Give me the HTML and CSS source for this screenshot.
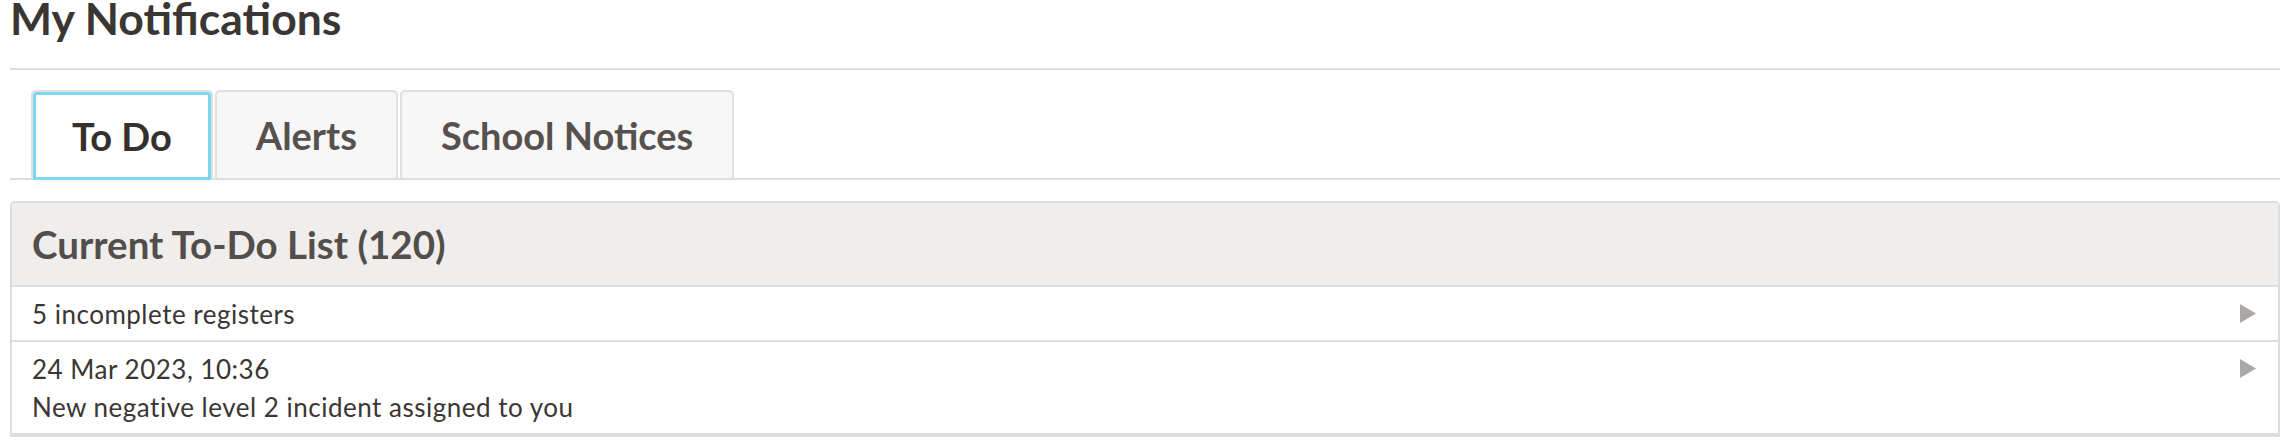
FILE: index.html
```html
<!DOCTYPE html>
<html lang="en">
<head>
<meta charset="utf-8">
<title>My Notifications</title>
<link rel="stylesheet" href="styles.css">
</head>
<body>
<div class="page">
  <h1 class="title">My Notifications</h1>
  <div class="tabs">
    <div class="tab active">To Do</div>
    <div class="tab">Alerts</div>
    <div class="tab">School Notices</div>
  </div>
  <div class="panel">
    <div class="panel-head">Current To-Do List (120)</div>
    <div class="row">
      <div class="row-text"><div>5 incomplete registers</div></div>
      <svg class="arrow" width="16" height="19" viewBox="0 0 16 19"><polygon points="0,0 16,9.5 0,19" fill="#aba7a4"/></svg>
    </div>
    <div class="row">
      <div class="row-text">
        <div>24 Mar 2023, 10:36</div>
        <div>New negative level 2 incident assigned to you</div>
      </div>
      <svg class="arrow" width="16" height="19" viewBox="0 0 16 19"><polygon points="0,0 16,9.5 0,19" fill="#aba7a4"/></svg>
    </div>
  </div>
</div>
</body>
</html>
```
FILE: styles.css
```css
html, body {
  margin: 0;
  padding: 0;
  background: #ffffff;
}
body {
  font-family: Lato, "Open Sans", sans-serif;
  color: #3b3633;
}
.page {
  padding: 0 4px 0 10px;
}
.title {
  margin: 0;
  font-size: 44.5px;
  font-weight: 700;
  line-height: 36px;
  color: #3a3634;
  padding-bottom: 32px;
  border-bottom: 2px solid #dddddd;
}
.tabs {
  display: flex;
  gap: 2px;
  margin-top: 20px;
  padding-left: 21px;
  border-bottom: 2px solid #dddddd;
  height: 88px;
}
.tab {
  height: 88px;
  box-sizing: border-box;
  padding: 0 39px;
  display: flex;
  align-items: center;
  font-size: 38px;
  font-weight: 700;
  color: #56514e;
  background: #f7f7f7;
  border: 2px solid #e0e0e0;
  border-bottom: none;
  border-radius: 5px 5px 0 0;
}
.tab.active {
  height: 90px;
  background: #ffffff;
  color: #33302e;
  box-shadow: inset 0 0 0 3px #7fd7ef;
}
.panel {
  margin-top: 21px;
  border: 2px solid #dddddd;
  border-radius: 5px 5px 0 0;
}
.panel-head {
  height: 82px;
  display: flex;
  align-items: center;
  padding-left: 20px;
  background: #efeeec;
  border-radius: 3px 3px 0 0;
  border-bottom: 2px solid #dddddd;
  font-size: 38.5px;
  font-weight: 700;
  color: #534e4b;
}
.row {
  display: flex;
  align-items: flex-start;
  justify-content: space-between;
  padding: 8px 22px 7px 20px;
  border-bottom: 2px solid #dddddd;
  font-size: 26px;
  letter-spacing: 0.5px;
  line-height: 38px;
  color: #3b3633;
}
.arrow {
  flex: none;
  margin-top: 9px;
}
```
